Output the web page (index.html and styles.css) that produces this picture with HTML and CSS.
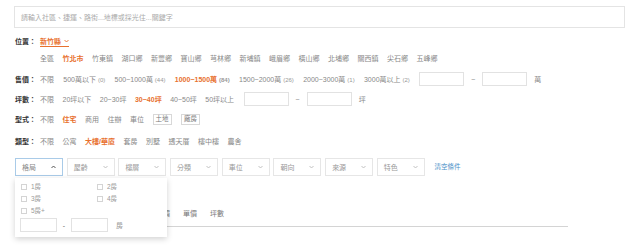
FILE: index.html
```html
<!DOCTYPE html>
<html lang="zh-Hant">
<head>
    <meta charset="UTF-8">
    <meta name="viewport" content="width=device-width, initial-scale=1.0">
    <title>搜尋條件</title>
    <link rel="stylesheet" href="styles.css">
</head>
<body>

<div class="search-box">請輸入社區、捷運、路街...地標或採光住...關鍵字</div>

<div class="filters">
    <!-- 位置 -->
    <div class="row row-location">
        <span class="label">位置：</span>
        <span class="county">新竹縣
            <svg width="5" height="4" viewBox="0 0 5 4"><polyline points="0.5,1 2.5,3 4.5,1" fill="none" stroke="#e8712f" stroke-width="0.9"/></svg>
        </span>
    </div>
    <div class="row row-districts">
        <span class="opt">全區</span>
        <span class="opt active">竹北市</span>
        <span class="opt">竹東鎮</span>
        <span class="opt">湖口鄉</span>
        <span class="opt">新豐鄉</span>
        <span class="opt">寶山鄉</span>
        <span class="opt">芎林鄉</span>
        <span class="opt">新埔鎮</span>
        <span class="opt">峨眉鄉</span>
        <span class="opt">橫山鄉</span>
        <span class="opt">北埔鄉</span>
        <span class="opt">關西鎮</span>
        <span class="opt">尖石鄉</span>
        <span class="opt">五峰鄉</span>
    </div>

    <!-- 售價 -->
    <div class="row row-price">
        <span class="label">售價：</span>
        <span class="opt">不限</span>
        <span class="opt">500萬以下 <small>(0)</small></span>
        <span class="opt">500~1000萬 <small>(44)</small></span>
        <span class="opt active">1000~1500萬 <small>(84)</small></span>
        <span class="opt">1500~2000萬 <small>(26)</small></span>
        <span class="opt">2000~3000萬 <small>(1)</small></span>
        <span class="opt">3000萬以上 <small>(2)</small></span>
        <span class="range">
            <input type="text" class="range-input">
            <span>~</span>
            <input type="text" class="range-input">
            <span>萬</span>
        </span>
    </div>

    <!-- 坪數 -->
    <div class="row row-area">
        <span class="label">坪數：</span>
        <span class="opt">不限</span>
        <span class="opt">20坪以下</span>
        <span class="opt">20~30坪</span>
        <span class="opt active">30~40坪</span>
        <span class="opt">40~50坪</span>
        <span class="opt">50坪以上</span>
        <span class="range range-area">
            <input type="text" class="range-input">
            <span>~</span>
            <input type="text" class="range-input">
            <span>坪</span>
        </span>
    </div>

    <!-- 型式 -->
    <div class="row row-type">
        <span class="label">型式：</span>
        <span class="opt">不限</span>
        <span class="opt active">住宅</span>
        <span class="opt">商用</span>
        <span class="opt">住辦</span>
        <span class="opt">車位</span>
        <span class="tag-btn">土地</span>
        <span class="tag-btn">廠房</span>
    </div>

    <!-- 類型 -->
    <div class="row row-kind">
        <span class="label">類型：</span>
        <span class="opt">不限</span>
        <span class="opt">公寓</span>
        <span class="opt active">大樓/華廈</span>
        <span class="opt">套房</span>
        <span class="opt">別墅</span>
        <span class="opt">透天厝</span>
        <span class="opt">樓中樓</span>
        <span class="opt">農舍</span>
    </div>

    <!-- 下拉選單 -->
    <div class="row row-selects">
        <div class="select-wrap">
            <div class="select open">格局
                <svg width="5" height="4" viewBox="0 0 5 4"><polyline points="0.5,3 2.5,1 4.5,3" fill="none" stroke="#444" stroke-width="0.9"/></svg>
            </div>
            <div class="dropdown">
                <div class="check-grid">
                    <label class="check"><span class="box"></span>1房</label>
                    <label class="check"><span class="box"></span>2房</label>
                    <label class="check"><span class="box"></span>3房</label>
                    <label class="check"><span class="box"></span>4房</label>
                    <label class="check"><span class="box"></span>5房+</label>
                </div>
                <div class="dropdown-range">
                    <input type="text" class="room-input">
                    <span class="dash">-</span>
                    <input type="text" class="room-input">
                    <span class="unit">房</span>
                </div>
            </div>
        </div>
        <div class="select">屋齡 <svg width="5" height="4" viewBox="0 0 5 4"><polyline points="0.5,1 2.5,3 4.5,1" fill="none" stroke="#bbb" stroke-width="0.9"/></svg></div>
        <div class="select">樓層 <svg width="5" height="4" viewBox="0 0 5 4"><polyline points="0.5,1 2.5,3 4.5,1" fill="none" stroke="#bbb" stroke-width="0.9"/></svg></div>
        <div class="select">分類 <svg width="5" height="4" viewBox="0 0 5 4"><polyline points="0.5,1 2.5,3 4.5,1" fill="none" stroke="#bbb" stroke-width="0.9"/></svg></div>
        <div class="select">車位 <svg width="5" height="4" viewBox="0 0 5 4"><polyline points="0.5,1 2.5,3 4.5,1" fill="none" stroke="#bbb" stroke-width="0.9"/></svg></div>
        <div class="select">朝向 <svg width="5" height="4" viewBox="0 0 5 4"><polyline points="0.5,1 2.5,3 4.5,1" fill="none" stroke="#bbb" stroke-width="0.9"/></svg></div>
        <div class="select">來源 <svg width="5" height="4" viewBox="0 0 5 4"><polyline points="0.5,1 2.5,3 4.5,1" fill="none" stroke="#bbb" stroke-width="0.9"/></svg></div>
        <div class="select">特色 <svg width="5" height="4" viewBox="0 0 5 4"><polyline points="0.5,1 2.5,3 4.5,1" fill="none" stroke="#bbb" stroke-width="0.9"/></svg></div>
        <span class="clear-link">清空條件</span>
    </div>

    <!-- 排序 -->
    <div class="sort-bar">
        <span class="sort-item">預設</span>
        <span class="sort-item">最新</span>
        <span class="sort-item">總價</span>
        <span class="sort-item">單價</span>
        <span class="sort-item">坪數</span>
    </div>
</div>

</body>
</html>
```

FILE: styles.css
```css
body {
    font-family: "Liberation Sans", "Noto Sans CJK TC", sans-serif;
    font-size: 7px;
    color: #888;
    background-color: #fff;
    margin: 0;
    padding: 0;
    min-height: 249px;
}
.search-box {
    margin: 6px 15px 0 14px;
    height: 22px;
    border: 1px solid #e4e4e4;
    box-sizing: border-box;
    padding-left: 6px;
    display: flex;
    align-items: center;
    color: #aaa;
}
.filters {
    padding-left: 15px;
    padding-bottom: 22px;
}
.row {
    display: flex;
    align-items: center;
    gap: 8.5px;
    line-height: 1;
    white-space: nowrap;
}
.label {
    width: 25px;
    margin-right: -8.5px;
    color: #333;
    font-weight: bold;
}
.opt small {
    font-size: 6px;
    color: #999;
}
.active {
    color: #e8712f;
    font-weight: bold;
}
.row-location {
    margin-top: 7px;
    height: 12px;
}
.county {
    color: #e8712f;
    font-weight: bold;
    display: flex;
    align-items: center;
    gap: 3px;
    height: 12px;
    border-bottom: 1px solid #e8712f;
    box-sizing: border-box;
    padding-top: 1px;
}
.row-districts {
    margin-top: 5px;
    height: 12px;
    padding-left: 25px;
}
.row-price {
    margin-top: 7px;
    height: 16px;
    gap: 9.3px;
}
.row-price .label {
    margin-right: -9.3px;
}
.row-area {
    margin-top: 4px;
    height: 16px;
}
.row-type {
    margin-top: 4px;
    height: 16px;
}
.row-kind {
    margin-top: 6px;
    height: 16px;
}
.range {
    display: flex;
    align-items: center;
    gap: 7px;
}
.range-area {
    margin-left: 1px;
}
.range-input {
    width: 45px;
    height: 14px;
    border: 1px solid #e2e2e2;
    box-sizing: border-box;
    margin: 0;
    padding: 0;
    outline: none;
}
.tag-btn {
    border: 1px solid #d8d8d8;
    height: 11px;
    padding: 0 2px;
    box-sizing: border-box;
    display: flex;
    align-items: center;
    font-size: 6.5px;
    color: #777;
}
.tag-btn + .tag-btn {
    margin-left: 1px;
}
.row-selects {
    margin-top: 9px;
    height: 18px;
    gap: 3.7px;
    align-items: stretch;
}
.select-wrap {
    position: relative;
    display: flex;
}
.select {
    width: 48px;
    height: 18px;
    border: 1px solid #e6e6e6;
    box-sizing: border-box;
    padding: 0 6px 0 6px;
    display: flex;
    align-items: center;
    justify-content: space-between;
    color: #999;
}
.select.open {
    border-color: #a9cbe8;
    color: #888;
}
.clear-link {
    color: #4a90c8;
    align-self: center;
    margin-left: 6px;
    font-size: 6.5px;
}
.dropdown {
    position: absolute;
    left: 0;
    top: 20px;
    width: 152px;
    height: 59px;
    background: #fff;
    box-shadow: 0 2px 6px rgba(0, 0, 0, 0.18);
    box-sizing: border-box;
    padding: 3px 6px 0 6px;
    z-index: 10;
}
.check-grid {
    display: grid;
    grid-template-columns: 76px 60px;
    grid-auto-rows: 12px;
}
.check {
    display: flex;
    align-items: center;
    gap: 4px;
    color: #999;
    font-size: 6.5px;
}
.box {
    width: 6px;
    height: 6px;
    border: 1px solid #d4d4d4;
    box-sizing: border-box;
}
.dropdown-range {
    display: flex;
    align-items: center;
    margin-top: 1px;
    margin-left: -1px;
}
.room-input {
    width: 37px;
    height: 14px;
    border: 1px solid #e2e2e2;
    box-sizing: border-box;
    margin: 0;
    padding: 0;
}
.dash {
    width: 14px;
    text-align: center;
    color: #666;
}
.unit {
    margin-left: 8px;
    color: #999;
}
.sort-bar {
    margin-top: 27px;
    width: 466px;
    height: 20px;
    padding-left: 87px;
    padding-bottom: 3px;
    box-sizing: content-box;
    border-bottom: 1px solid #d4d4d4;
    display: flex;
    align-items: center;
    gap: 13px;
    line-height: 1;
}
.sort-item {
    color: #777;
    font-size: 7px;
}
```
